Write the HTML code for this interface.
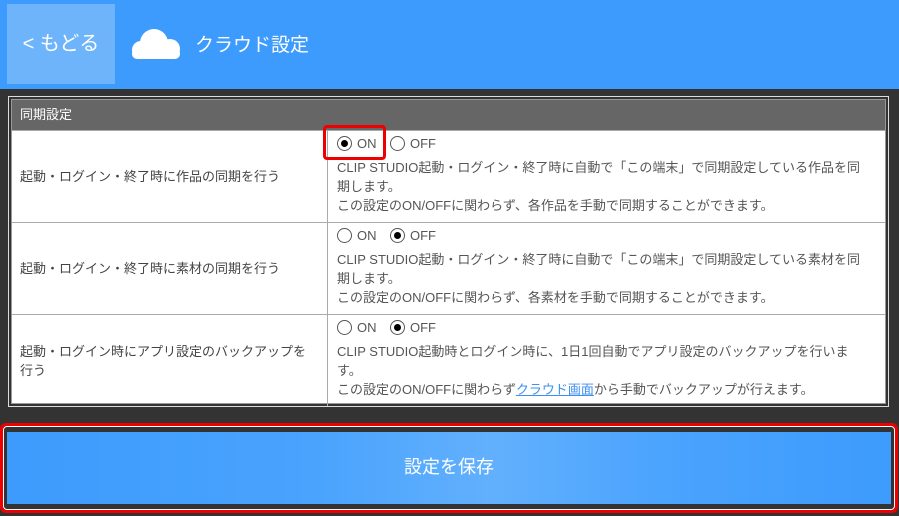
<!DOCTYPE html>
<html><head><meta charset="utf-8"><style>
*{margin:0;padding:0;box-sizing:border-box}
body{width:899px;height:516px;background:#333;font-family:"Liberation Sans","Noto Sans CJK JP",sans-serif;position:relative;overflow:hidden}
.hdr{position:absolute;left:0;top:0;width:899px;height:89px;background:#3d9bfd}
.back{position:absolute;left:7px;top:4px;width:108px;height:80px;background:#6eb4fb;color:#fff;font-size:20px;line-height:80px;text-align:center}
.title{position:absolute;left:195px;top:30px;color:#fff;font-size:19px}
.tbl{position:absolute;left:8px;top:96px;width:881px;height:311px;border:1px solid #ddd;background:#333}
.in{position:absolute;left:2px;top:2px;right:2px;bottom:2px;border:1px solid #999;background:#fff}
.th{position:absolute;left:0;top:0;right:0;height:30px;background:#666;color:#fff;font-size:13px;line-height:30px;padding-left:8px}
.row{position:absolute;left:0;right:0;height:92px;border-top:1px solid #aaa}
.l{position:absolute;left:0;top:0;width:316px;height:100%;border-right:1px solid #aaa;font-size:13px;color:#444;padding:0 14px 0 8px;display:flex;align-items:center;line-height:19px}
.r{position:absolute;left:325px;top:3px;right:20px;font-size:13px;color:#555;line-height:19px}
.rad{display:inline-block;width:15px;height:15px;border:1px solid #555;border-radius:50%;vertical-align:-3px;position:relative;margin-right:5px;background:#fff}
.rad.on::after{content:"";position:absolute;left:3px;top:3px;width:7px;height:7px;border-radius:50%;background:#000}
.opt{display:inline-block;width:53px}
.d{display:block;margin-top:5px}
a{color:#3d8ff0;text-decoration:underline}
.red{position:absolute;left:323px;top:125px;width:63px;height:35px;border:3px solid #e00;border-radius:4px}
.bo{position:absolute;left:0;top:423px;width:898px;height:90px;border:3px solid #e00;border-radius:6px}
.bw{position:absolute;left:3px;top:426px;width:892px;height:84px;border:1px solid #fff;border-radius:4px}
.btn{position:absolute;left:7px;top:432px;width:884px;height:72px;background:linear-gradient(90deg,#3d9bfd 0%,#4aa3fd 35%,#62b0fd 55%,#4aa3fd 75%,#3d9bfd 100%);color:#fff;font-size:18px;text-align:center;line-height:70px}
</style></head><body>
<div class="hdr">
<div class="back">&lt; もどる</div>
<svg style="position:absolute;left:129px;top:28px" width="53" height="32" viewBox="0 0 53 32" fill="#fff"><circle cx="12" cy="22" r="9"/><circle cx="25" cy="15" r="14"/><circle cx="41" cy="21" r="10"/><rect x="3" y="20" width="48" height="11" rx="5"/></svg>
<div class="title">クラウド設定</div>
</div>
<div class="tbl"><div class="in">
<div class="th">同期設定</div>
<div class="row" style="top:30px"><div class="l">起動・ログイン・終了時に作品の同期を行う</div>
<div class="r"><span class="opt"><span class="rad on"></span>ON</span><span class="rad"></span>OFF<span class="d">CLIP STUDIO起動・ログイン・終了時に自動で「この端末」で同期設定している作品を同期します。<br>この設定のON/OFFに関わらず、各作品を手動で同期することができます。</span></div></div>
<div class="row" style="top:122px"><div class="l">起動・ログイン・終了時に素材の同期を行う</div>
<div class="r"><span class="opt"><span class="rad"></span>ON</span><span class="rad on"></span>OFF<span class="d">CLIP STUDIO起動・ログイン・終了時に自動で「この端末」で同期設定している素材を同期します。<br>この設定のON/OFFに関わらず、各素材を手動で同期することができます。</span></div></div>
<div class="row" style="top:214px"><div class="l">起動・ログイン時にアプリ設定のバックアップを行う</div>
<div class="r"><span class="opt"><span class="rad"></span>ON</span><span class="rad on"></span>OFF<span class="d">CLIP STUDIO起動時とログイン時に、1日1回自動でアプリ設定のバックアップを行います。<br>この設定のON/OFFに関わらず<a>クラウド画面</a>から手動でバックアップが行えます。</span></div></div>
</div></div>
<div class="red"></div>
<div class="bo"></div><div class="bw"></div>
<div class="btn">設定を保存</div>
</body></html>
